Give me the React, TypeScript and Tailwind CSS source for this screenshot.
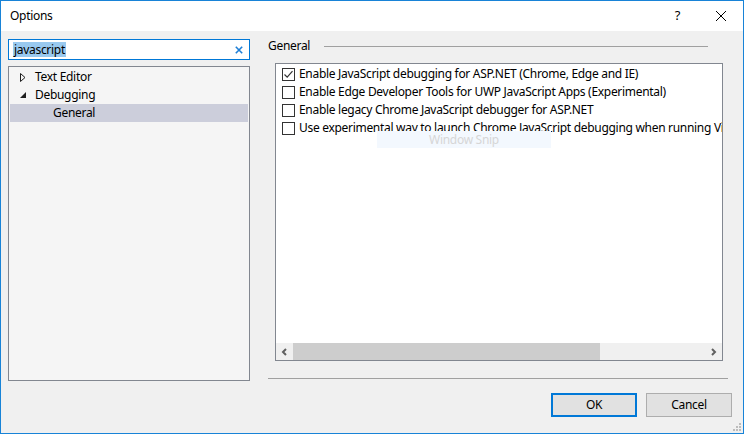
import { useState } from 'react';

const font = { fontFamily: '"Segoe UI", "Noto Sans", "Liberation Sans", sans-serif' };

const options = [
  { label: 'Enable JavaScript debugging for ASP.NET (Chrome, Edge and IE)', checked: true },
  { label: 'Enable Edge Developer Tools for UWP JavaScript Apps (Experimental)', checked: false },
  { label: 'Enable legacy Chrome JavaScript debugger for ASP.NET', checked: false },
  { label: 'Use experimental way to launch Chrome JavaScript debugging when running Visual Studio', checked: false },
];

const Checkbox = ({ checked, onClick }: { checked: boolean; onClick: () => void }) => (
  <button
    type="button"
    onClick={onClick}
    className="w-[13px] h-[13px] shrink-0 border border-[#333] bg-white flex items-center justify-center"
  >
    {checked && (
      <svg width="11" height="11" viewBox="0 0 11 11">
        <path d="M1.5 5.5 L4.2 8.2 L9.5 2.2" fill="none" stroke="#333" strokeWidth="1.2" />
      </svg>
    )}
  </button>
);

const App = () => {
  const [checks, setChecks] = useState(options.map(o => o.checked));

  return (
    <div style={font} className="w-[744px] h-[434px] border border-[#1883d7] bg-[#f0f0f0] text-[12px] tracking-[-0.3px] text-black flex flex-col overflow-hidden">
      {/* Title bar */}
      <div className="h-[30px] bg-white flex items-center shrink-0">
        <span className="ml-[9px] text-[12px]">Options</span>
        <span className="ml-auto mr-[35px] text-[13px]">?</span>
        <svg width="12" height="12" viewBox="0 0 12 12" className="mr-[16px]">
          <path d="M1 1 L11 11 M11 1 L1 11" stroke="#000" strokeWidth="1" />
        </svg>
      </div>

      {/* Main */}
      <div className="h-[350px] flex pt-[8px] shrink-0">
        {/* Left column */}
        <div className="ml-[7px] w-[242px] flex flex-col">
          <div className="h-[21px] border border-[#0078d7] bg-white flex items-center pl-[4px] pr-[6px]">
            <span className="bg-[#99c9ef] leading-[15px] px-px">javascript</span>
            <svg width="8" height="8" viewBox="0 0 8 8" className="ml-auto">
              <path d="M0.8 0.8 L7.2 7.2 M7.2 0.8 L0.8 7.2" stroke="#1e7fd6" strokeWidth="1.6" />
            </svg>
          </div>
          <div className="mt-[6px] h-[315px] border border-[#828790] bg-[#f5f5f5] p-px">
            <div className="h-[18px] flex items-center">
              <svg width="6" height="9" viewBox="0 0 6 9" className="ml-[10px]">
                <path d="M0.5 0.5 L5 4.5 L0.5 8.5 Z" fill="none" stroke="#1e1e1e" strokeWidth="1" />
              </svg>
              <span className="ml-[9px]">Text Editor</span>
            </div>
            <div className="h-[18px] flex items-center">
              <svg width="6" height="6" viewBox="0 0 6 6" className="ml-[10px]">
                <path d="M6 0 L6 6 L0 6 Z" fill="#1e1e1e" />
              </svg>
              <span className="ml-[9px]">Debugging</span>
            </div>
            <div className="h-[18px] flex items-center bg-[#cccedb]">
              <span className="ml-[43px]">General</span>
            </div>
          </div>
        </div>

        {/* Right column */}
        <div className="ml-[18px] w-[460px] flex flex-col">
          <div className="h-[14px] flex items-center">
            <span>General</span>
            <div className="ml-[14px] mr-[20px] flex-1 h-px bg-[#a0a0a0]" />
          </div>
          <div className="relative mt-[10px] ml-[7px] w-[448px] h-[298px] border border-[#828790] bg-white flex flex-col">
            <div className="flex-1 pt-px overflow-hidden">
              {options.map((o, i) => (
                <div key={i} className="h-[18px] flex items-center pl-[6px] whitespace-nowrap">
                  <Checkbox
                    checked={checks[i]}
                    onClick={() => setChecks(checks.map((c, j) => (j === i ? !c : c)))}
                  />
                  <span className="ml-[4px]">{o.label}</span>
                </div>
              ))}
            </div>
            {/* horizontal scrollbar */}
            <div className="h-[17px] bg-[#f0f0f0] flex items-center">
              <div className="w-[17px] h-full flex items-center justify-center">
                <svg width="7" height="8" viewBox="0 0 7 8">
                  <path d="M5 1 L2 4 L5 7" fill="none" stroke="#606060" strokeWidth="2" />
                </svg>
              </div>
              <div className="w-[307px] h-full bg-[#cdcdcd]" />
              <div className="ml-auto w-[17px] h-full flex items-center justify-center">
                <svg width="7" height="8" viewBox="0 0 7 8">
                  <path d="M2 1 L5 4 L2 7" fill="none" stroke="#606060" strokeWidth="2" />
                </svg>
              </div>
            </div>
            {/* ghost snip label */}
            <div className="absolute left-[101px] top-[67px] w-[174px] h-[17px] bg-[#f3f8fe] flex items-center justify-center text-[#d6d6d6]">
              Window Snip
            </div>
          </div>
          <div className="mt-[17px] h-px bg-[#a0a0a0]" />
        </div>
      </div>

      {/* Buttons */}
      <div className="flex justify-end gap-[9px] pt-[12px] pr-[11px] relative flex-1">
        <button className="w-[86px] h-[24px] border-2 border-[#0078d7] bg-[#e1e1e1]">OK</button>
        <button className="w-[86px] h-[24px] border border-[#adadad] bg-[#e1e1e1]">Cancel</button>
        <svg width="10" height="10" viewBox="0 0 10 10" className="absolute right-[1px] bottom-[1px]">
          <rect x="7" y="1" width="2" height="2" fill="#bcbcbc" />
          <rect x="4" y="4" width="2" height="2" fill="#bcbcbc" />
          <rect x="7" y="4" width="2" height="2" fill="#bcbcbc" />
          <rect x="1" y="7" width="2" height="2" fill="#bcbcbc" />
          <rect x="4" y="7" width="2" height="2" fill="#bcbcbc" />
          <rect x="7" y="7" width="2" height="2" fill="#bcbcbc" />
        </svg>
      </div>
    </div>
  );
};

export default App;
